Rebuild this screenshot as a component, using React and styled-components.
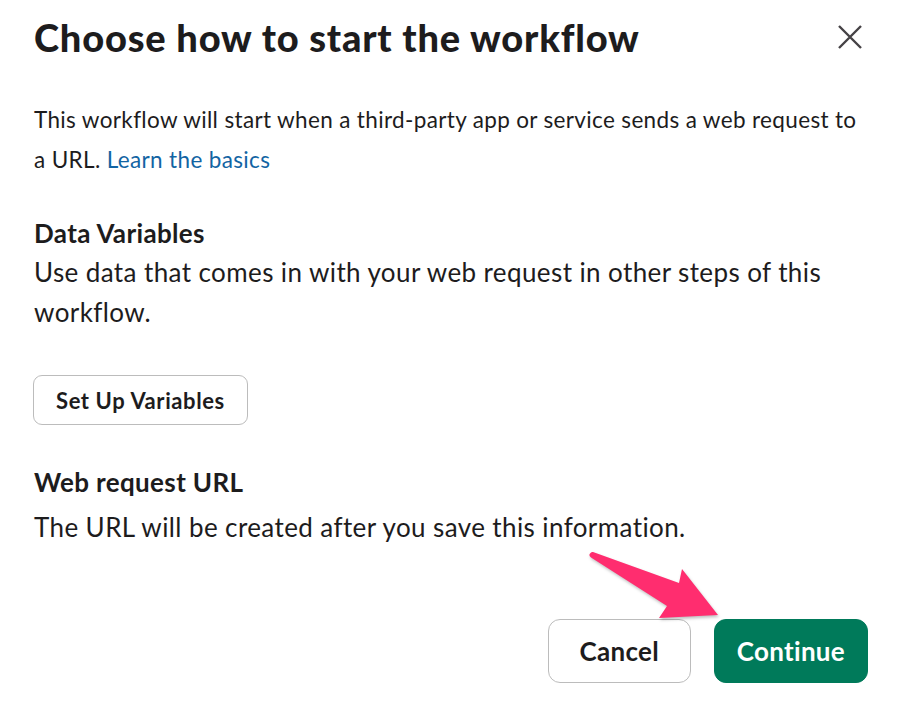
import styled, { createGlobalStyle } from "styled-components";

const GlobalStyle = createGlobalStyle`
  body {
    margin: 0;
    background: #fff;
    font-family: Lato, "Noto Sans", sans-serif;
    color: #1d1c1d;
  }
`;

const Modal = styled.div`
  position: relative;
  width: 898px;
  height: 710px;
  box-sizing: border-box;
  padding: 15px 31px 0 34px;
`;

const Header = styled.div`
  display: flex;
  justify-content: space-between;
  align-items: center;
  height: 44px;
`;

const Title = styled.h1`
  margin: 0;
  font-size: 38px;
  font-weight: 900;
  line-height: 44px;
  letter-spacing: 0.8px;
`;

const CloseButton = styled.button`
  display: flex;
  align-items: center;
  justify-content: center;
  width: 32px;
  height: 32px;
  margin-right: 1px;
  padding: 0;
  border: none;
  background: transparent;
  color: #454245;
  cursor: pointer;
`;

const Intro = styled.p`
  margin: 41px 0 0;
  font-size: 22.5px;
  line-height: 40px;
  letter-spacing: 0.35px;
`;

const Link = styled.a`
  color: #1264a3;
  text-decoration: none;
`;

const SectionTitle = styled.h2`
  margin: ${(p) => p.$top}px 0 0;
  font-size: 26px;
  font-weight: 700;
  line-height: 38px;
  letter-spacing: 0.35px;
`;

const SectionText = styled.p`
  margin: ${(p) => p.$top || 0}px 0 0;
  font-size: 26px;
  line-height: 40px;
  letter-spacing: 0.4px;
`;

const Button = styled.button`
  box-sizing: border-box;
  min-width: ${(p) => (p.$large ? 143 : 0)}px;
  height: ${(p) => (p.$large ? 64 : 50)}px;
  padding: 0 22px;
  border-radius: ${(p) => (p.$large ? 12 : 9)}px;
  border: 1px solid ${(p) => (p.$primary ? "#007a5a" : "#bcbcbc")};
  background: ${(p) => (p.$primary ? "#007a5a" : "#fff")};
  color: ${(p) => (p.$primary ? "#fff" : "#1d1c1d")};
  font-family: Lato, "Noto Sans", sans-serif;
  font-size: ${(p) => (p.$large ? 26 : 22)}px;
  font-weight: 700;
  letter-spacing: ${(p) => (p.$large ? 0.3 : 0.6)}px;
  cursor: pointer;
`;

const SetupButton = styled(Button)`
  margin-top: 43px;
  margin-left: -1px;
`;

const Footer = styled.div`
  display: flex;
  justify-content: flex-end;
  gap: 23px;
  margin: 72px -1px 0 0;
`;

const Arrow = styled.svg`
  position: absolute;
  left: 580px;
  top: 545px;
  overflow: visible;
  filter: drop-shadow(1px 2px 1.5px rgba(0, 0, 0, 0.25));
`;

function CloseIcon() {
  return (
    <svg width="24" height="24" viewBox="0 0 24 24">
      <path
        d="M1 1 L23 23 M23 1 L1 23"
        stroke="currentColor"
        strokeWidth="2.4"
        strokeLinecap="butt"
      />
    </svg>
  );
}

export default function App() {
  return (
    <>
      <GlobalStyle />
      <Modal>
        <Header>
          <Title>Choose how to start the workflow</Title>
          <CloseButton aria-label="Close">
            <CloseIcon />
          </CloseButton>
        </Header>

        <Intro>
          This workflow will start when a third-party app or service sends a web request to a
          URL. <Link href="#">Learn the basics</Link>
        </Intro>

        <SectionTitle $top={34}>Data Variables</SectionTitle>
        <SectionText>
          Use data that comes in with your web request in other steps of this workflow.
        </SectionText>
        <SetupButton>Set Up Variables</SetupButton>

        <SectionTitle $top={38}>Web request URL</SectionTitle>
        <SectionText $top={6}>The URL will be created after you save this information.</SectionText>

        <Footer>
          <Button $large>Cancel</Button>
          <Button $large $primary>
            Continue
          </Button>
        </Footer>

        <Arrow width="140" height="80" viewBox="0 0 140 80">
          <path
            d="M10.5 8 Q8 10 11 12.5 L87 61 L79 73 L138 70 L102 24 L99 38 L13 7 Q11.5 6.8 10.5 8 Z"
            fill="#ff2d6f"
          />
        </Arrow>
      </Modal>
    </>
  );
}
